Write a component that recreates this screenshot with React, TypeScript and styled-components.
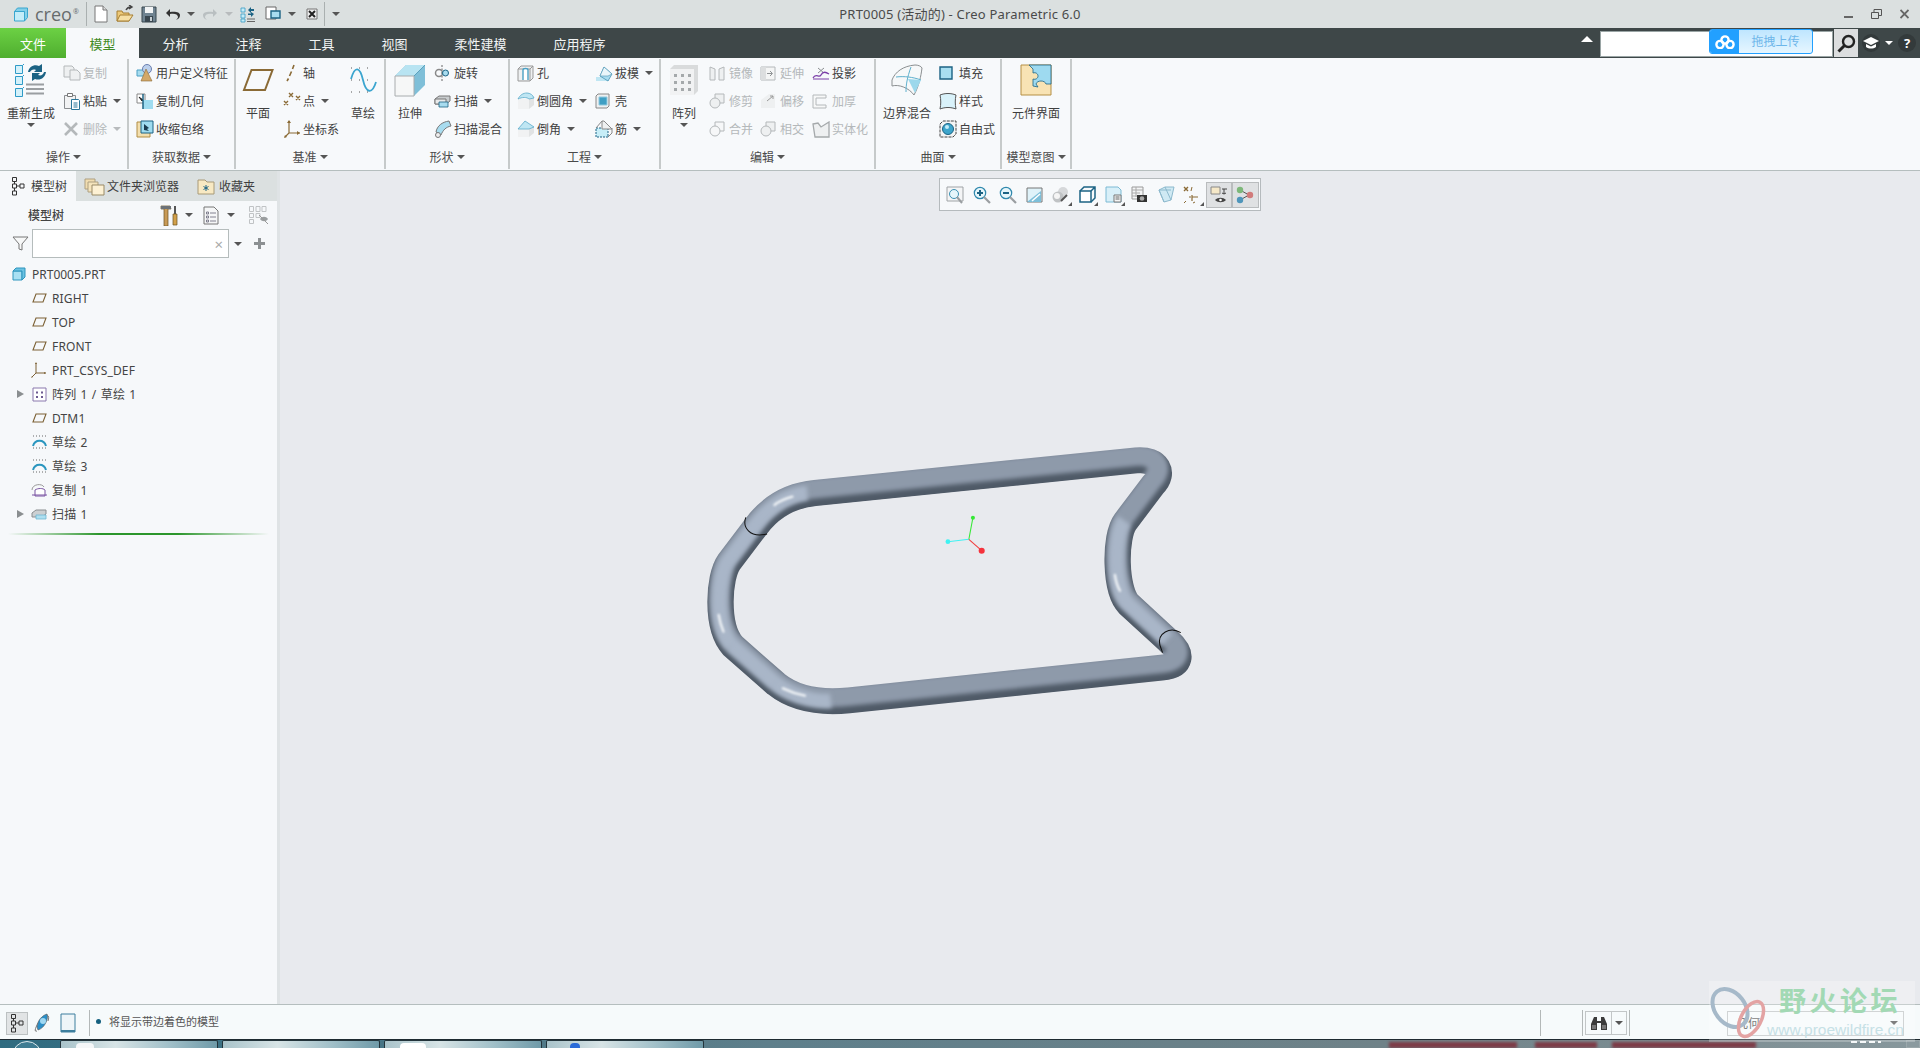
import React from 'react';
import styled, { createGlobalStyle } from 'styled-components';

const GlobalStyle = createGlobalStyle`
  html, body {
    margin: 0;
    padding: 0;
    overflow: hidden;
    background: #e8eaee;
  }
  * {
    box-sizing: border-box;
  }
`;

const FONT = '"Noto Sans", "Noto Sans CJK SC", sans-serif';

type IconDef = [number, number, React.ReactNode];

const TEAL = '#1c6384';
const SKY = '#a8dcef';
const BROWN = '#8a6a35';
const GREY = '#b4b8ba';

const icons: Record<string, IconDef> = {
  creo: [16, 15, <><path d="M1.5 4.5h10v9.5h-10z" fill="#c4ecf8" stroke="#39a6cf" /><path d="M1.5 4.5l3-3.5h10v9.5l-3 3.5v-9.5z" fill="#83cfe9" stroke="#39a6cf" /></>],
  qatNew: [14, 18, <><path d="M1 1h8l4 4v12H1z" fill="#fff" stroke="#777" /><path d="M9 1v4h4" fill="#ddd" stroke="#777" /></>],
  qatOpen: [18, 18, <><path d="M1 6h5l1 2h6v8H1z" fill="#edc978" stroke="#a67f33" /><path d="M1 16l3-6h13l-4 6z" fill="#f6dfa4" stroke="#a67f33" /><path d="M10 5c1-2 3-3 5-3M13 0l3 2-3 2" fill="none" stroke="#444" strokeWidth="1.4" /></>],
  qatSave: [16, 17, <><path d="M1 1h14v15H1z" fill="#6f8391" stroke="#39464f" /><path d="M4 1h8v6H4z" fill="#f2f4f5" /><path d="M4 10h8v6H4z" fill="#39464f" /><path d="M9 11h2v4H9z" fill="#c7d0d5" /></>],
  qatUndo: [16, 13, <path d="M5 1L1 5l4 4V6c4-1 8 0 8 3 0 1-1 2-2 3 3-1 4-3 4-5 0-3-5-4-10-3z" fill="#333" />],
  qatRedo: [16, 13, <path d="M11 1l4 4-4 4V6C7 5 3 6 3 9c0 1 1 2 2 3-3-1-4-3-4-5 0-3 5-4 10-3z" fill="#b9bfc1" />],
  qatRegen: [16, 17, <><path d="M1 2h4v4H1zM1 8h4v4H1zM1 13h4v3H1z" fill="#c4ecf8" stroke="#3a9cc4" strokeWidth=".8" /><path d="M8 4l3-3v2h3v2h-3v2zM14 8l-3 3V9H8V7.500h3V6z" fill={TEAL} /><path d="M7 13h8M7 15.500h8" stroke="#666" /></>],
  qatWindows: [17, 16, <><path d="M1 1h10v12H1z" fill="#fff" stroke="#666" /><path d="M6 5h9v7H6z" fill={SKY} stroke={TEAL} strokeWidth="1.4" /></>],
  qatClose: [12, 12, <><path d="M1 1h10v10H1z" fill="#eee" stroke="#777" /><path d="M3 3l6 6M9 3L3 9" stroke="#222" strokeWidth="2" /></>],

  regen: [34, 34, <><g fill="#d4f1fa" stroke="#2f9bc7"><path d="M1.500 2.500h7v8h-7zM1.500 13.500h7v8h-7zM1.500 25.500h7v8h-7z" /></g><path d="M8.500 2.500l1.500-1.500M8.500 13.500l1.500-1.500M8.500 25.500l1.500-1.500" stroke="#2f9bc7" /><path d="M14 9c1-5 6-8 11-6l3-2v8h-8l2-2c-3-1-5 0-6 2zM32 9c-1 6-6 9-11 7l-3 2v-8h8l-2 2c3 1 5 0 6-3z" fill={TEAL} /><path d="M12 21.500h18M12 26h18M12 30.500h18" stroke="#9a9ea1" strokeWidth="2" /></>],
  copy: [18, 16, <g fill="#eef0f1" stroke={GREY}><path d="M1 1h8l2 2v9H1z" /><path d="M7 5h7l3 3v7H7z" /></g>],
  paste: [18, 18, <><path d="M1.500 3.500h11v13h-11z" fill="#f2f3f4" stroke="#8a8d90" /><path d="M4.500 1.500h5v3h-5z" fill="#fff" stroke="#777" /><path d="M8.500 7.500h7l1 1v9h-8z" fill="#fff" stroke="#2b7699" /><path d="M10.500 11h4M10.500 13h4M10.500 15h4" stroke="#2b7699" /></>],
  remove: [16, 16, <path d="M2 2l12 12M14 2L2 14" stroke={GREY} strokeWidth="2.600" />],
  udf: [18, 18, <><path d="M1 6h10l-2 6H1z" fill={SKY} stroke="#4a9fc4" /><circle cx="11" cy="5" r="4.500" fill="#bcd0ec" stroke="#6b7fb0" /><path d="M10 5l-5 12h11z" fill="#d3a868" stroke="#8a6a35" strokeWidth=".6" /></>],
  copyGeom: [18, 18, <><path d="M1 2h8v9H1z" fill="#fff" stroke="#888" /><path d="M3 5l4 3-1 1z" fill="#222" stroke="#222" /><path d="M7 8h10v9H7z" fill="#9fdcf0" /><path d="M7 2v15" stroke={TEAL} strokeWidth="1.500" /></>],
  shrink: [18, 18, <><path d="M1 2h13v15H1z" fill="#f3dfae" stroke="#b18d44" /><path d="M5 1h12v12H5z" fill="#9fdcf0" stroke={TEAL} /><path d="M8 4l5 4-2 1 2 2-5-1z" fill="#1a3c50" /></>],
  plane: [32, 24, <path d="M9.500 2h21L23 22H2z" fill="none" stroke={BROWN} strokeWidth="2" />],
  axis: [14, 18, <path d="M11 1l-1.500 4M8.500 7.500l-2 4.500M5.500 14.500L4 17" stroke={BROWN} strokeWidth="1.600" />],
  point: [18, 18, <g stroke={BROWN} strokeWidth="1.400"><path d="M6 1l4 4M10 1L6 5M13 4l4 4M17 4l-4 4M1 9l4 4M5 9l-4 4" /></g>],
  csys: [18, 18, <><path d="M6 1v12l-4 4M6 13h11" fill="none" stroke={BROWN} strokeWidth="1.200" /><path d="M6 0l2 3H4zM17 13l-3 2v-4zM1 18l1-3 2 2z" fill={BROWN} /></>],
  sketch: [28, 28, <><path d="M2 12C6 -2 11 0 14 13s9 15 13 2" fill="none" stroke="#3ba5cf" strokeWidth="1.800" transform="translate(0 1)" /><path d="M2 2h24M2 26h24M2 14h24" stroke="#555" strokeWidth="1" strokeDasharray="1 7" /></>],
  extrude: [32, 34, <><path d="M1 13L12 2h19v20L20 33z" fill="#7fbfd8" /><path d="M1 13L12 2h19L20 13z" fill="#b8e4f2" /><path d="M1 13h19v20H1z" fill="#f6f7f7" stroke="#a8acae" /><path d="M20 13L31 2" stroke="#5aa0bd" /></>],
  revolve: [16, 16, <><path d="M8 0v16" stroke="#666" strokeDasharray="2 1.500" /><circle cx="5" cy="8" r="3.500" fill="none" stroke="#888" strokeWidth="1.500" /><circle cx="11.500" cy="8" r="3" fill={SKY} stroke={TEAL} /></>],
  sweep: [17, 14, <><path d="M1 5l4-3h11v5l-4 3H1z" fill="#c8ccce" stroke="#777" /><path d="M1 5h11v5H1z" fill="#e8eaeb" stroke="#777" /><path d="M5 8h9v5H5z" fill={SKY} stroke={TEAL} strokeWidth=".8" /></>],
  sweepBlend: [18, 18, <><path d="M2 12C3 6 8 2 15 1l2 5c-5 1-8 4-10 9z" fill={SKY} stroke="#777" /><circle cx="4" cy="15" r="2.500" fill="#eee" stroke="#777" /></>],
  hole: [17, 18, <><path d="M1 5l3-3h12v12l-3 3H1z" fill="#eef0f1" stroke="#999" /><path d="M1 5h12v12M13 5l3-3" fill="none" stroke="#999" /><path d="M6 16V6c0-2 5-2 5 0v10" fill="#fff" stroke="#4aa0c4" strokeWidth="1.400" /></>],
  round: [18, 18, <><path d="M1 7h11v10H1z" fill="#f1f2f3" /><path d="M12 7l5-1v7l-5 4z" fill="#e1e3e4" /><path d="M1 7C3 3 6 1 10 1c3 0 6 2 7 5l-5 1C10 5 5 5 1 7z" fill="#bfe6f3" stroke="#5aa9c9" strokeWidth=".8" /></>],
  chamfer: [18, 18, <><path d="M1 9h11v8H1z" fill="#f1f2f3" /><path d="M12 9l5-2v6l-5 4z" fill="#e1e3e4" /><path d="M1 9l7-8 9 6-5 2z" fill="#bfe6f3" stroke="#5aa9c9" strokeWidth=".8" /></>],
  draft: [18, 17, <><path d="M1 12h13v4H1z" fill="#bfe6f3" /><path d="M5 11L9 2l8 7-4 7z" fill="#a8dcef" stroke="#4a93b3" strokeWidth=".8" /><path d="M9 2L5 11h8l4-2z" fill="#eaf6fa" stroke="#4a93b3" strokeWidth=".6" /></>],
  shell: [15, 16, <><path d="M1 3l2-2h11v12l-2 2H1z" fill="#eef0f1" stroke="#888" /><path d="M4 4h8v8H4z" fill="#3f9fc4" stroke="#8fc9df" /></>],
  rib: [18, 18, <><path d="M1 8h12v9H1z" fill="#c7eef8" stroke={TEAL} strokeDasharray="2 1" /><path d="M7 1v8h10L9 1z" fill="#eef0f1" stroke="#888" /><path d="M1 8l6-7M13 17l4-4V8" fill="none" stroke="#888" /></>],
  pattern: [30, 32, <><path d="M1 5l4-4h24v26l-4 4H1z" fill="#d9dbdc" /><path d="M1 5h24v26H1z" fill="#f1f2f3" /><g fill="#a5a9ab"><path d="M5 10h3v3H5zM12 10h3v3h-3zM19 10h3v3h-3zM5 17h3v3H5zM12 17h3v3h-3zM19 17h3v3h-3zM5 24h3v3H5zM12 24h3v3h-3zM19 24h3v3h-3z" /></g></>],
  mirror: [16, 16, <g fill="#eef0f1" stroke={GREY}><path d="M1 2l5 2v11H1zM15 2l-5 2v11h5z" /></g>],
  trim: [16, 16, <g fill="#eef0f1" stroke={GREY}><path d="M6 1h9v9H6z" /><circle cx="6" cy="10" r="5" /></g>],
  merge: [16, 16, <g fill="#f6f7f8" stroke={GREY}><path d="M6 1h9v9H6z" /><circle cx="6" cy="10" r="5" /></g>],
  extend: [16, 15, <><path d="M1 1h14v13H1z" fill="#f4f5f5" stroke={GREY} /><path d="M1 1h5v13H1z" fill="#dcdedf" /><path d="M7 7.500h5M10 5l2.500 2.500L10 10" fill="none" stroke="#8f9395" /></>],
  offset: [16, 16, <><path d="M1 15V7l8-6h6v14z" fill="#eef0f1" /><path d="M7 8l6-5M10 3h3v3" fill="none" stroke="#999" /></>],
  intersect: [16, 16, <g fill="#eef0f1" stroke={GREY}><path d="M6 1h9v9H6z" /><circle cx="6" cy="10" r="5" /></g>],
  project: [18, 14, <><path d="M6 2l6 5M6 7l6-5" stroke="#8a8d90" /><path d="M1 12c3-6 6 1 8-3s5-3 8-1" fill="none" stroke="#7b3fa8" strokeWidth="1.300" /><path d="M1 13h16" stroke="#7b3fa8" /></>],
  thicken: [15, 15, <path d="M1 1h13v3H4v7h10v3H1z" fill="#f7f8f8" stroke={GREY} />],
  solidify: [18, 17, <path d="M1 3l5-1 3 4 8-5v15H3z" fill="#eef0f1" stroke="#a5a9ab" strokeWidth="1.300" />],
  boundary: [32, 32, <><path d="M1 16C4 8 12 2 24 1c3 0 6 1 7 3-1 8-3 18-8 27C18 24 8 20 1 22z" fill="#f6f8f9" stroke="#8b8f91" /><path d="M15 28c0-7 1-14 5-25M5 13c8-1 17 0 25 3" fill="none" stroke="#5fb0cd" /><path d="M17 15l13 1-6 13z" fill="#9bd8ec" /></>],
  fill: [14, 14, <><path d="M1 1h12v12H1z" fill="#a8dff1" stroke={TEAL} strokeWidth="1.400" /></>],
  style: [18, 18, <><path d="M1 3c5-2 11-2 16 0-1 5-1 9 0 14-5-2-11-2-16 0 1-5 1-9 0-14z" fill="#d9f2fa" stroke="#555" /></>],
  freestyle: [18, 18, <><path d="M1 4l3-3h13v13l-3 3H1z" fill="#f4f5f5" stroke="#444" strokeDasharray="3 1" /><circle cx="9" cy="9" r="5.500" fill="#3ea5cb" stroke="#1c6384" /><circle cx="8" cy="7" r="2" fill="#c5edf8" /></>],
  component: [32, 32, <><path d="M1 1h30v30H1z" fill="#f8e3b4" stroke="#b58f45" /><path d="M9 1h22v19h-5c-1-4-9-4-10 0l2 3-5-1V15c3 1 5-1 5-3s-2-4-5-3V5z" fill="#9edaf0" stroke={TEAL} strokeWidth=".8" /></>],

  treeTab: [14, 20, <g fill="none" stroke="#333"><path d="M1.500 1.500h4v4h-4zM1.500 8h4v4h-4zM1.500 15h4v4h-4zM9 8h4v4H9z" /><path d="M3.500 5.500V8M3.500 12v3M5.500 10H9" /></g>],
  folders: [21, 20, <><path d="M1 3h10v10H1z" fill="#f1ddb0" stroke="#ad9f80" /><path d="M4 6h10v10H4z" fill="#f5e4bc" stroke="#ad9f80" /><path d="M8 9h12v10H8z" fill="#fdf1d4" stroke="#998a66" /></>],
  favorite: [18, 17, <><path d="M1 2h7l2 2h7v12H1z" fill="#f8e9c3" stroke="#a89a78" /><path d="M9 7v6M6.500 8.500l5 3M11.500 8.500l-5 3" stroke={TEAL} /></>],
  tools: [18, 21, <><path d="M1 1h9l1 3H8v17H4V4H1z" fill="#c89a56" stroke="#6c5020" strokeWidth=".7" /><path d="M1 1h10v3H1z" fill="#6c7176" /><path d="M14 1h2v8h-2z" fill="#555" /><path d="M13 9h4v11h-4z" fill="#d2a04a" stroke="#6c5020" strokeWidth=".7" /></>],
  doc: [16, 19, <><path d="M1 1h10l4 4v13H1z" fill="#f5f6f7" stroke="#777" /><path d="M3.500 6h2v2h-2zM3.500 10h2v2h-2zM3.500 14h2v2h-2zM7 7h6M7 11h6M7 15h6" fill="none" stroke="#667" strokeWidth=".8" /></>],
  treeHide: [21, 20, <><g fill="none" stroke="#c0c3c5"><path d="M1.500 1.500h4v5h-4zM8 1.500h4v5H8zM14 1.500h4v5h-4zM1.500 8.500h4v4h-4zM1.500 14.500h4v4h-4zM8 8.500h4v4H8z" /></g><path d="M12 14c2-3 6-3 8 0-2 3-6 3-8 0z" fill="#9a9ea0" /><path d="M11 10l9 9" stroke="#999" /></>],
  funnel: [17, 15, <><path d="M1 1h15L10 8v6l-3-1V8z" fill="#f7f8f8" stroke="#777" /></>],
  part: [14, 14, <><path d="M1 4h9v9H1z" fill="#a8e0f3" stroke="#2f95bd" /><path d="M1 4l3-3h9v9l-3 3V4z" fill="#6bc2e2" stroke="#2f95bd" /></>],
  datumPlane: [15, 10, <path d="M4 1h10l-3 8H1z" fill="none" stroke="#7c6034" strokeWidth="1.100" />],
  treeCsys: [16, 16, <><path d="M5 1v10l-4 4M5 11h10" fill="none" stroke="#7c6034" /><path d="M5 0l1 2H4zM15 11l-2 1v-2zM0 16l1-2 1 1z" fill="#7c6034" /></>],
  treePattern: [15, 15, <><path d="M1 1h13v13H1z" fill="#fff" stroke="#8a78ad" /><path d="M4 4.500h2v2H4zM9 4.500h2v2H9zM4 9h2v2H4zM9 9h2v2H9z" fill="#6d5a91" /></>],
  treeSketch: [15, 14, <><path d="M1 1h13M1 13h13" stroke="#666" strokeDasharray="1 2" /><path d="M1 11c2-7 11-7 13 0" fill="none" stroke="#2b96bf" strokeWidth="2" /></>],
  treeCopy: [16, 16, <><path d="M1 8c0-6 10-7 12-3" fill="none" stroke="#999" /><path d="M4 8c3-2 8-2 10 0v6H4z" fill="#fff" stroke="#7a55a3" /><path d="M1 13h15" stroke="#7a55a3" /></>],
  treeSweep: [16, 12, <><path d="M1 5l4-3h10v4l-4 3H1z" fill="#ccd0d2" stroke="#8a8e90" /><path d="M5 7h10v4H5z" fill="#aedff0" stroke="#6fb6d1" strokeWidth=".8" /></>],

  zoomFit: [18, 18, <><path d="M1 1h16v14H1z" fill="#f4f5f6" stroke="#9fa3a6" /><circle cx="8" cy="8" r="4.500" fill="#e6f6fb" stroke="#3a90b4" /><path d="M11 11l5 6" stroke="#9a9ea1" strokeWidth="2" /></>],
  zoomIn: [18, 18, <><circle cx="7" cy="7" r="5.700" fill="#e6f6fb" stroke="#2f88ad" strokeWidth="1.200" /><path d="M4 7h6M7 4v6" stroke={TEAL} strokeWidth="2" /><path d="M11 11l6 6" stroke="#9a9ea1" strokeWidth="2.200" /></>],
  zoomOut: [18, 18, <><circle cx="7" cy="7" r="5.700" fill="#e6f6fb" stroke="#2f88ad" strokeWidth="1.200" /><path d="M4 7h6" stroke={TEAL} strokeWidth="2" /><path d="M11 11l6 6" stroke="#9a9ea1" strokeWidth="2.200" /></>],
  repaint: [17, 16, <><path d="M1 1h15v14H1z" fill="#dff2f9" stroke="#777" /><path d="M1 15L15 4v11z" fill="#7dbfd9" /><path d="M6 14l8-7" stroke="#fff" strokeWidth="1.500" /></>],
  shade: [17, 17, <><circle cx="11" cy="6" r="5" fill="#d6d8da" /><circle cx="6" cy="11" r="5.500" fill="#c0c3c5" /><circle cx="5" cy="10" r="3" fill="#f5f5f5" /><path d="M9 15l6-6" stroke="#555" strokeWidth="2" /></>],
  named: [17, 17, <><path d="M1 5h11v11H1z" fill="#fff" stroke={TEAL} strokeWidth="1.500" /><path d="M1 5l4-4h11v11l-4 4M12 5l4-4" fill="none" stroke={TEAL} strokeWidth="1.500" /></>],
  sections: [17, 17, <><path d="M1 1h12l3 3v12H1z" fill="#d8eff8" stroke="#7dbad4" /><path d="M9 9h7v7H9z" fill="#f4f5f5" stroke="#777" /><path d="M10.500 11h4M10.500 13h4" stroke="#666" /></>],
  camera: [17, 17, <><path d="M1 1h11v12H1z" fill="#f4f5f6" stroke="#999" /><path d="M1 4h11M1 7h8M1 10h6M5 1v10" stroke="#aaa" /><path d="M6 9h10v7H6z" fill="#333" /><circle cx="11" cy="12.500" r="2.300" fill="#aaa" /></>],
  view: [17, 17, <><path d="M1 4l6-3h9l-3 13-7 2z" fill="#cfe9f3" stroke="#8cb9cd" /><path d="M1 4l5 12M7 1l6 13M1 4h12" stroke="#8cb9cd" fill="none" /></>],
  datums: [19, 18, <><path d="M1 1l4 4M5 1L1 5" stroke={BROWN} strokeWidth="1.400" /><path d="M9 1L8 5M3 15L1 17M12 16l-2 1" stroke={BROWN} /><path d="M9 9v6M9 11h6M6 11h2" stroke={BROWN} strokeWidth="1.200" fill="none" /></>],
  annot: [18, 18, <><path d="M1 1h9v7H1z" fill="#f5e8c8" stroke="#888" /><path d="M12 3h5M14 3v5l-2-1M14 8l2-1" fill="none" stroke="#444" /><path d="M5 14c3-3 8-3 11 0-3 3-8 3-11 0z" fill="#444" /><circle cx="10.500" cy="14" r="1.300" fill="#fff" /></>],
  spin: [18, 18, <><path d="M4 4l9 5M4 14l9-5" stroke="#555" /><circle cx="4" cy="4" r="3.200" fill="#7db87a" /><circle cx="14" cy="9" r="3.200" fill="#d17b7b" /><circle cx="4" cy="14" r="3.200" fill="#4f96bb" /></>],

  globe: [16, 20, <><path d="M4 17C1 12 6 3 13 1c2 4-2 14-9 16z" fill="#2b8fc7" stroke="#555" strokeWidth=".6" /><path d="M3 18c-3 1-2-2 1-8M13 2c2 1 2 3 1 6" fill="none" stroke="#777" /><circle cx="9" cy="8" r="3" fill="#9fd8f2" /></>],
  pane: [16, 20, <><path d="M1 1h14v18H1z" fill="#eef5f8" stroke="#3d7f9e" /><path d="M1 18h14" stroke="#3d7f9e" strokeWidth="2" /></>],
  binoculars: [18, 16, <><path d="M1 9l3-7h3v4h4V2h3l3 7v6h-6V8H7v7H1z" fill="#3b3b3b" /><path d="M2 10h4v4H2zM12 10h4v4h-4z" fill="#777" /></>],
  search: [19, 19, <><circle cx="11.500" cy="7.500" r="5.500" fill="none" stroke="#222" strokeWidth="2.400" /><path d="M7.500 11.500L1.500 17.500" stroke="#222" strokeWidth="3" /></>],
  cap: [18, 14, <><path d="M1 5l8-4 8 4-8 4z" fill="#fff" /><path d="M4 8v3c3 2 7 2 10 0V8l-5 2.500z" fill="#fff" /></>],
  baidu: [20, 14, <><circle cx="10" cy="5" r="3.600" fill="none" stroke="#fff" strokeWidth="2.400" /><circle cx="5" cy="9.500" r="3.600" fill="none" stroke="#fff" strokeWidth="2.400" /><circle cx="15" cy="9.500" r="3.600" fill="none" stroke="#fff" strokeWidth="2.400" /></>],
};

const IconSvg = styled.svg`
  display: block;
  flex: none;
`;

const Icon: React.FC<{ name: string }> = ({ name }) => {
  const [w, h, body] = icons[name];
  return (
    <IconSvg width={w} height={h} viewBox={`0 0 ${w} ${h}`}>
      {body}
    </IconSvg>
  );
};

const Page = styled.div`
  position: relative;
  width: 1920px;
  height: 1048px;
  display: flex;
  flex-direction: column;
  overflow: hidden;
  font-family: ${FONT};
  font-size: 12px;
  color: #3f3f3f;
`;

const Caret = styled.span<{ $off?: boolean; $light?: boolean }>`
  flex: none;
  width: 0;
  height: 0;
  border-left: 4px solid transparent;
  border-right: 4px solid transparent;
  border-top: 4px solid ${(p) => (p.$light ? '#fff' : p.$off ? '#b8bbbd' : '#555')};
`;

/* title bar */
const TitleBar = styled.header`
  height: 28px;
  display: grid;
  grid-template-columns: 1fr auto 1fr;
  align-items: center;
  background: #dbe0e0;
`;

const QuickBar = styled.div`
  display: flex;
  align-items: center;
  padding-left: 13px;
`;

const Logo = styled.span`
  width: 73px;
  display: flex;
  align-items: center;
  gap: 6px;
  font-family: "Open Sans", sans-serif;
  font-size: 18px;
  line-height: 20px;
  color: #676c6d;

  sup {
    font-size: 7px;
    line-height: 7px;
    margin: -6px 0 0 -5px;
  }
`;

const TitleSep = styled.i`
  width: 1px;
  height: 24px;
  background: #aab0b0;
`;

const QuickSlot = styled.span<{ $w: number; $left?: number }>`
  width: ${(p) => p.$w}px;
  margin-left: ${(p) => p.$left ?? 0}px;
  flex: none;
  display: flex;
  justify-content: center;
  align-items: center;
`;

const TitleText = styled.div`
  padding-bottom: 1px;
  font-size: 13px;
  letter-spacing: 0.2px;
  color: #4a4a4a;
  white-space: nowrap;
`;

const WindowControls = styled.div`
  justify-self: end;
  display: flex;
  align-items: center;
  gap: 18px;
  padding-right: 11px;
`;

/* tab bar */
const TabBar = styled.nav`
  height: 30px;
  display: flex;
  align-items: stretch;
  background: #3e4748;
`;

const FileTab = styled.div`
  width: 66px;
  display: flex;
  align-items: center;
  justify-content: center;
  background: linear-gradient(180deg, #6cd144, #4fae2f);
  color: #fff;
  font-size: 13px;
`;

const Tab = styled.div<{ $active?: boolean }>`
  display: flex;
  align-items: center;
  padding: 0 23.5px;
  font-size: 13px;
  background: ${(p) => (p.$active ? '#f7f9fb' : 'transparent')};
  color: ${(p) => (p.$active ? '#3f8a24' : '#f2f4f4')};
`;

const TabTools = styled.div`
  margin-left: auto;
  display: flex;
  align-items: center;
`;

const Chevron = styled.i`
  width: 0;
  height: 0;
  margin: -9px 7px 0 0;
  border-left: 6px solid transparent;
  border-right: 6px solid transparent;
  border-bottom: 6px solid #fff;
`;

const SearchBox = styled.div`
  position: relative;
  width: 233px;
  height: 26px;
  margin: 2px 0 0 0;
  background: #fff;
  border: 1px solid #9aa5a5;
`;

const UploadBadge = styled.div`
  position: absolute;
  top: -3px;
  left: 108px;
  width: 104px;
  height: 25px;
  display: flex;
  border: 1px solid #22a0ff;
  border-radius: 3px;
  overflow: hidden;
  background: linear-gradient(180deg, #bfe6ff, #e6f6ff);
  color: #6db6ea;
  font-size: 12px;
`;

const UploadLogo = styled.div`
  width: 29px;
  display: flex;
  align-items: center;
  justify-content: center;
  background: #22a0ff;
`;

const UploadText = styled.div`
  flex: 1;
  text-align: center;
  line-height: 23px;
`;

const SearchButton = styled.div`
  width: 24px;
  height: 28px;
  margin-left: 1px;
  display: flex;
  align-items: center;
  justify-content: center;
  background: #dcdedf;
`;

const RoundGlyph = styled.span`
  width: 18px;
  height: 18px;
  display: flex;
  align-items: center;
  justify-content: center;
  border-radius: 50%;
  background: #333a3b;
  color: #fff;
  font-weight: 700;
  font-size: 13px;
`;

const TabHelp = styled.div`
  display: flex;
  align-items: center;
  gap: 5px;
  padding: 0 4px 0 4px;
`;

/* ribbon */
const Ribbon = styled.section`
  height: 113px;
  display: flex;
  background: #f7f9fb;
  border-bottom: 1px solid #b5bebe;
`;

const Group = styled.div<{ $w: number }>`
  width: ${(p) => p.$w}px;
  flex: none;
  display: flex;
  flex-direction: column;
  height: 110px;
  margin-top: 1px;
  border-right: 2px solid #c6caca;
`;

const GroupBody = styled.div<{ $pad: number }>`
  height: 86px;
  display: flex;
  padding-left: ${(p) => p.$pad}px;
`;

const GroupName = styled.div`
  flex: 1;
  display: flex;
  align-items: center;
  justify-content: center;
  gap: 3px;
  color: #4a4a4a;
`;

const BigTool = styled.div<{ $w: number }>`
  width: ${(p) => p.$w}px;
  flex: none;
  display: flex;
  flex-direction: column;
  align-items: center;
  white-space: nowrap;
  color: #3f3f3f;
`;

const BigIconBox = styled.div`
  height: 42px;
  display: flex;
  align-items: center;
  justify-content: center;
`;

const BigLabel = styled.div`
  margin-top: 5px;
  line-height: 16px;
`;

const BigCaret = styled.div`
  margin-top: 5px;
`;

const ToolColumn = styled.div<{ $w: number; $left?: number }>`
  width: ${(p) => p.$w}px;
  margin-left: ${(p) => p.$left ?? 0}px;
  flex: none;
  display: flex;
  flex-direction: column;
`;

const SmallTool = styled.div<{ $off?: boolean }>`
  height: 28px;
  display: flex;
  align-items: center;
  white-space: nowrap;
  color: ${(p) => (p.$off ? '#b4b8ba' : '#3f3f3f')};
`;

const SmallIcon = styled.span`
  width: 20px;
  flex: none;
  display: flex;
  align-items: center;
`;

const CaretGap = styled.span`
  display: flex;
  margin-left: 6px;
`;

const Tool: React.FC<{ icon: string; label: string; off?: boolean; arrow?: boolean }> = ({ icon, label, off, arrow }) => (
  <SmallTool $off={off}>
    <SmallIcon>
      <Icon name={icon} />
    </SmallIcon>
    {label}
    {arrow && (
      <CaretGap>
        <Caret $off={off} />
      </CaretGap>
    )}
  </SmallTool>
);

const Big: React.FC<{ icon: string; label: string; w: number; arrow?: boolean }> = ({ icon, label, w, arrow }) => (
  <BigTool $w={w}>
    <BigIconBox>
      <Icon name={icon} />
    </BigIconBox>
    <BigLabel>{label}</BigLabel>
    {arrow && (
      <BigCaret>
        <Caret />
      </BigCaret>
    )}
  </BigTool>
);

const RibbonGroup: React.FC<{ w: number; pad: number; name: string; children: React.ReactNode }> = ({ w, pad, name, children }) => (
  <Group $w={w}>
    <GroupBody $pad={pad}>{children}</GroupBody>
    <GroupName>
      {name}
      <Caret />
    </GroupName>
  </Group>
);

/* main area */
const Main = styled.main`
  flex: 1;
  min-height: 0;
  display: flex;
`;

const Panel = styled.aside`
  width: 280px;
  flex: none;
  display: flex;
  flex-direction: column;
  background: #f6f8fa;
  border-right: 3px solid #dfe3e5;
`;

const PanelTabs = styled.div`
  height: 30px;
  display: flex;
  background: #dbe0e0;
`;

const PanelTab = styled.div<{ $active?: boolean; $w: number; $gap: number }>`
  width: ${(p) => p.$w}px;
  display: flex;
  align-items: center;
  gap: ${(p) => p.$gap}px;
  padding-left: ${(p) => (p.$active ? 11 : 8)}px;
  background: ${(p) => (p.$active ? '#f6f8fa' : 'transparent')};
`;

const TreeHeader = styled.div`
  height: 28px;
  display: flex;
  align-items: center;
  padding-left: 28px;
`;

const TreeTitle = styled.span`
  width: 132px;
  font-weight: 500;
  color: #444;
`;

const HeaderSlot = styled.span<{ $w: number }>`
  width: ${(p) => p.$w}px;
  flex: none;
  display: flex;
  align-items: center;
`;

const FilterRow = styled.div`
  height: 29px;
  display: flex;
  align-items: center;
  padding-left: 12px;
`;

const FilterInput = styled.div`
  width: 197px;
  height: 29px;
  margin: 0 5px 0 3px;
  display: flex;
  align-items: center;
  justify-content: flex-end;
  padding-right: 5px;
  background: #fff;
  border: 1px solid #b5bcbc;
  color: #aaa;
  font-size: 15px;
`;

const PlusMark = styled.span`
  width: 11px;
  height: 11px;
  margin-left: 12px;
  background:
    linear-gradient(#8c9092, #8c9092) center / 11px 3px no-repeat,
    linear-gradient(#8c9092, #8c9092) center / 3px 11px no-repeat;
`;

const TreeList = styled.ul`
  list-style: none;
  margin: 4px 0 0;
  padding: 0;
`;

const TreeRow = styled.li<{ $root?: boolean }>`
  height: 24px;
  display: flex;
  align-items: center;
  color: #444;
  letter-spacing: ${(p) => (p.$root ? 0 : 0.15)}px;
  word-spacing: 1px;
  padding-left: ${(p) => (p.$root ? 12 : 31)}px;
  gap: ${(p) => (p.$root ? 6 : 5)}px;
  position: relative;
`;

const Expander = styled.i`
  position: absolute;
  left: 17px;
  top: 8px;
  width: 0;
  height: 0;
  border-top: 4px solid transparent;
  border-bottom: 4px solid transparent;
  border-left: 7px solid #8a8e90;
`;

const TreeIconBox = styled.span`
  width: 16px;
  display: flex;
  justify-content: center;
`;

const TreeEnd = styled.div`
  height: 2px;
  margin: 7px 8px 0;
  background: linear-gradient(90deg, transparent, #2c962c 35%, #2c962c 65%, transparent);
`;

const Canvas = styled.div`
  position: relative;
  flex: 1;
  display: flex;
  flex-direction: column;
  align-items: center;
  padding-top: 7px;
  background: #e8eaee;
`;

const ViewBar = styled.div`
  width: 322px;
  height: 33px;
  display: flex;
  align-items: center;
  padding-left: 2px;
  background: #f7f9fb;
  border: 1.500px solid #b5babd;
`;

const ViewButton = styled.span<{ $on?: boolean; $more?: boolean }>`
  position: relative;
  width: 26.4px;
  height: 26px;
  flex: none;
  display: flex;
  align-items: center;
  justify-content: center;
  background: ${(p) => (p.$on ? '#dfe1e3' : 'transparent')};
  border: 1px solid ${(p) => (p.$on ? '#b9bcbe' : 'transparent')};
  ${(p) =>
    p.$more &&
    `&::after {
      content: '';
      position: absolute;
      right: 1px;
      bottom: 1px;
      border-left: 4px solid transparent;
      border-bottom: 4px solid #555;
    }`}
`;

const Model = styled.svg`
  position: absolute;
  left: 410px;
  top: 259px;
`;

/* status */
const StatusBar = styled.footer`
  height: 35px;
  display: flex;
  align-items: center;
  padding: 2px 0 0 6px;
  background: #f6fafb;
  border-top: 1px solid #b5bebe;
`;

const StatusToggle = styled.span`
  width: 22px;
  height: 23px;
  display: flex;
  align-items: center;
  justify-content: center;
  background: #e1e4e5;
  border: 1px solid #bcc1c2;
`;

const StatusIcon = styled.span<{ $w: number }>`
  width: ${(p) => p.$w}px;
  display: flex;
  justify-content: center;
`;

const StatusSep = styled.i<{ $left?: number }>`
  width: 1px;
  height: 26px;
  flex: none;
  margin-left: ${(p) => p.$left ?? 0}px;
  background: #b3b8b8;
`;

const Bullet = styled.i`
  width: 5px;
  height: 5px;
  margin: -3px 8px 0 6px;
  border-radius: 50%;
  background: #14607f;
`;

const Message = styled.span`
  width: 1431px;
  flex: none;
  margin-top: -4px;
  font-size: 11px;
  color: #555;
`;

const FindGroup = styled.div`
  width: 42px;
  height: 24px;
  margin: 0 2px;
  display: flex;
  border: 1px solid #c2c6c7;
`;

const FindIcon = styled.span`
  flex: 1;
  display: flex;
  align-items: center;
  justify-content: center;
  border-right: 1px solid #c2c6c7;
`;

const FindCaret = styled.span`
  width: 14px;
  display: flex;
  align-items: center;
  justify-content: center;
`;

const FilterSelect = styled.div`
  width: 177px;
  height: 25px;
  margin-left: 97px;
  display: flex;
  align-items: center;
  justify-content: space-between;
  padding: 0 5px 0 8px;
  border: 1px solid #c2c6c7;
  color: #555;
`;

/* windows taskbar, cut off by the bottom of the screen */
const TaskBar = styled.div`
  height: 9px;
  flex: none;
  display: flex;
  gap: 4px;
  border-top: 1px solid #1d2a30;
  background: linear-gradient(90deg, #2f6b80, #5e7f8b 40%, #6f8288 72%, #87979c);
`;

const StartOrb = styled.div`
  width: 56px;
  flex: none;
  position: relative;
  overflow: hidden;
  &::after {
    content: '';
    position: absolute;
    top: 1px;
    left: 12px;
    width: 28px;
    height: 28px;
    border-radius: 50%;
    background: #3f7c92;
    border: 1px solid #dbe8ec;
  }
`;

const TaskItem = styled.div`
  width: 158px;
  flex: none;
  display: flex;
  padding-left: 15px;
  border: 1px solid #23343b;
  border-bottom: 0;
  border-radius: 2px 2px 0 0;
  background: linear-gradient(90deg, #a9c3ca, #d7e4e6 35%, #a0bfc8 70%, #6f9aa8);
`;

const TaskIconTop = styled.span<{ $color: string; $w: number; $left: number }>`
  width: ${(p) => p.$w}px;
  height: 6px;
  margin: 2px 0 0 ${(p) => p.$left}px;
  border-radius: 4px 4px 0 0;
  background: ${(p) => p.$color};
`;

const TaskGlow = styled.div<{ $w: number; $left: number }>`
  width: ${(p) => p.$w}px;
  height: 6px;
  flex: none;
  margin: 2px 0 0 ${(p) => p.$left}px;
  background: #7e3a46;
  filter: blur(1.500px);
`;

const Clock = styled.div`
  width: 30px;
  height: 2px;
  flex: none;
  margin: 1px 0 0 auto;
  background: repeating-linear-gradient(90deg, #f4f7f8 0 6px, transparent 6px 9px);
`;

const ShowDesktop = styled.div`
  width: 14px;
  flex: none;
  margin-left: 21px;
  border: 1px solid #9aa7ab;
  background: #8b9a9f;
`;

/* forum watermark */
const Watermark = styled.div`
  position: absolute;
  left: 1709px;
  top: 981px;
  width: 206px;
  height: 61px;
  display: flex;
  background: rgba(255, 255, 255, 0.25);
  pointer-events: none;
`;

const WatermarkRings = styled.svg`
  flex: none;
`;

const WatermarkText = styled.div`
  display: flex;
  flex-direction: column;
  margin-left: -2px;
`;

const WatermarkName = styled.div`
  margin: -1px 0 0 12px;
  font-family: "Noto Sans CJK SC", sans-serif;
  font-size: 27px;
  font-weight: 700;
  line-height: 40px;
  letter-spacing: 3.5px;
  color: #a2d9b4;
  white-space: nowrap;
`;

const WatermarkUrl = styled.div`
  margin-top: 1px;
  font-family: "Liberation Sans", sans-serif;
  font-size: 15.5px;
  line-height: 17px;
  color: #c6e1e6;
  white-space: nowrap;
`;

const TUBE =
  'M370 189 L1320 91 C1385 85 1405 130 1370 165 L1288 275 C1256 318 1256 480 1298 523 L1415 632 C1460 672 1455 707 1395 713 L470 811 C400 818 320 815 255 762 L127 648 C75 590 85 440 115 397 L197 287 C235 236 290 197 370 189 Z';

const BRIGHT = [
  'M127 648 C75 590 85 440 115 397 L197 287 C235 236 290 197 350 192',
  'M255 762 L127 648',
  'M420 815 C400 818 320 815 255 762',
  'M1288 275 C1256 318 1256 480 1298 523 L1415 632',
];

const TubeModel: React.FC = () => (
  <Model width={530} height={300} viewBox="0 0 1568 900" preserveAspectRatio="none">
    <defs>
      <mask id="tube-mask" maskUnits="userSpaceOnUse" x="0" y="0" width="1568" height="900">
        <path d={TUBE} fill="none" stroke="#fff" strokeWidth="78" />
      </mask>
      <filter id="soft" x="-20%" y="-20%" width="140%" height="140%">
        <feGaussianBlur stdDeviation="7" />
      </filter>
      <filter id="soft-small" x="-50%" y="-50%" width="200%" height="200%">
        <feGaussianBlur stdDeviation="3" />
      </filter>
    </defs>
    <g mask="url(#tube-mask)">
      <path d={TUBE} fill="none" stroke="#4f5a67" strokeWidth="82" />
      <g filter="url(#soft)" transform="translate(-3 -14)">
        <path d={TUBE} fill="none" stroke="#8e9aaa" strokeWidth="62" />
      </g>
      <g filter="url(#soft)" transform="translate(-3 -3)" fill="none" stroke="#a9b6c8" strokeWidth="44">
        {BRIGHT.map((d) => (
          <path key={d} d={d} />
        ))}
      </g>
      <g filter="url(#soft-small)" fill="none" stroke="#f1f4f7" strokeWidth="7" strokeLinecap="round">
        <path d="M250 225 C265 212 285 205 303 200" />
        <path d="M85 555 C88 575 93 590 99 605" />
        <path d="M275 775 C295 785 315 792 340 797" />
        <path d="M1257 435 C1260 455 1265 470 1272 482" />
      </g>
    </g>
    <g fill="none" stroke="#111" strokeWidth="3">
      <path d="M165 262 C155 290 175 325 228 312" />
      <path d="M1452 608 C1420 588 1382 610 1390 645 L1398 668" />
    </g>
    <path d="M825 328 L837 263" stroke="#35e835" strokeWidth="3" />
    <path d="M825 328 L763 335" stroke="#3ff2f2" strokeWidth="3" />
    <path d="M825 328 L863 362" stroke="#f23a3a" strokeWidth="3" />
    <circle cx="837" cy="263" r="6" fill="#35e835" />
    <circle cx="763" cy="335" r="7" fill="#3ff2f2" />
    <circle cx="863" cy="362" r="9" fill="#f5323c" />
  </Model>
);

const tree: { icon: string; label: string; more?: boolean }[] = [
  { icon: 'datumPlane', label: 'RIGHT' },
  { icon: 'datumPlane', label: 'TOP' },
  { icon: 'datumPlane', label: 'FRONT' },
  { icon: 'treeCsys', label: 'PRT_CSYS_DEF' },
  { icon: 'treePattern', label: '阵列 1 / 草绘 1', more: true },
  { icon: 'datumPlane', label: 'DTM1' },
  { icon: 'treeSketch', label: '草绘 2' },
  { icon: 'treeSketch', label: '草绘 3' },
  { icon: 'treeCopy', label: '复制 1' },
  { icon: 'treeSweep', label: '扫描 1', more: true },
];

const viewTools: { icon: string; on?: boolean; more?: boolean }[] = [
  { icon: 'zoomFit' },
  { icon: 'zoomIn' },
  { icon: 'zoomOut' },
  { icon: 'repaint' },
  { icon: 'shade', more: true },
  { icon: 'named', more: true },
  { icon: 'sections', more: true },
  { icon: 'camera' },
  { icon: 'view' },
  { icon: 'datums', more: true },
  { icon: 'annot', on: true },
  { icon: 'spin', on: true },
];

const App: React.FC = () => (
  <>
    <GlobalStyle />
    <Page>
      <TitleBar>
        <QuickBar>
          <Logo>
            <Icon name="creo" />
            creo
            <sup>®</sup>
          </Logo>
          <TitleSep />
          <QuickSlot $w={24} $left={2}><Icon name="qatNew" /></QuickSlot>
          <QuickSlot $w={24}><Icon name="qatOpen" /></QuickSlot>
          <QuickSlot $w={24}><Icon name="qatSave" /></QuickSlot>
          <QuickSlot $w={24}><Icon name="qatUndo" /></QuickSlot>
          <QuickSlot $w={12}><Caret /></QuickSlot>
          <QuickSlot $w={26}><Icon name="qatRedo" /></QuickSlot>
          <QuickSlot $w={12}><Caret $off /></QuickSlot>
          <QuickSlot $w={20} $left={3}><Icon name="qatRegen" /></QuickSlot>
          <QuickSlot $w={20} $left={5}><Icon name="qatWindows" /></QuickSlot>
          <QuickSlot $w={18}><Caret /></QuickSlot>
          <QuickSlot $w={22}><Icon name="qatClose" /></QuickSlot>
          <QuickSlot $w={2}><TitleSep /></QuickSlot>
          <QuickSlot $w={22}><Caret /></QuickSlot>
        </QuickBar>
        <TitleText>PRT0005 (活动的) - Creo Parametric 6.0</TitleText>
        <WindowControls>
          <svg width="9" height="10" viewBox="0 0 9 10"><path d="M0 8h9" stroke="#666" strokeWidth="2" /></svg>
          <svg width="11" height="10" viewBox="0 0 11 10"><path d="M.5 3.500h7v6h-7zM3 3V.5h7.500v6H8" fill="none" stroke="#555" /></svg>
          <svg width="9" height="10" viewBox="0 0 9 10"><path d="M.5 1l8 8M8.500 1l-8 8" stroke="#666" strokeWidth="1.800" /></svg>
        </WindowControls>
      </TitleBar>

      <TabBar>
        <FileTab>文件</FileTab>
        <Tab $active>模型</Tab>
        <Tab>分析</Tab>
        <Tab>注释</Tab>
        <Tab>工具</Tab>
        <Tab>视图</Tab>
        <Tab>柔性建模</Tab>
        <Tab>应用程序</Tab>
        <TabTools>
          <Chevron />
          <SearchBox>
            <UploadBadge>
              <UploadLogo><Icon name="baidu" /></UploadLogo>
              <UploadText>拖拽上传</UploadText>
            </UploadBadge>
          </SearchBox>
          <SearchButton><Icon name="search" /></SearchButton>
          <TabHelp>
            <RoundGlyph><Icon name="cap" /></RoundGlyph>
            <Caret $light />
            <RoundGlyph>?</RoundGlyph>
          </TabHelp>
        </TabTools>
      </TabBar>

      <Ribbon>
        <RibbonGroup w={129} pad={7} name="操作">
          <Big icon="regen" label="重新生成" w={48} arrow />
          <ToolColumn $w={60} $left={8}>
            <Tool icon="copy" label="复制" off />
            <Tool icon="paste" label="粘贴" arrow />
            <Tool icon="remove" label="删除" off arrow />
          </ToolColumn>
        </RibbonGroup>
        <RibbonGroup w={107} pad={7} name="获取数据">
          <ToolColumn $w={92}>
            <Tool icon="udf" label="用户定义特征" />
            <Tool icon="copyGeom" label="复制几何" />
            <Tool icon="shrink" label="收缩包络" />
          </ToolColumn>
        </RibbonGroup>
        <RibbonGroup w={150} pad={4} name="基准">
          <Big icon="plane" label="平面" w={36} />
          <ToolColumn $w={62} $left={7}>
            <Tool icon="axis" label="轴" />
            <Tool icon="point" label="点" arrow />
            <Tool icon="csys" label="坐标系" />
          </ToolColumn>
          <Big icon="sketch" label="草绘" w={36} />
        </RibbonGroup>
        <RibbonGroup w={124} pad={6} name="形状">
          <Big icon="extrude" label="拉伸" w={36} />
          <ToolColumn $w={70} $left={6}>
            <Tool icon="revolve" label="旋转" />
            <Tool icon="sweep" label="扫描" arrow />
            <Tool icon="sweepBlend" label="扫描混合" />
          </ToolColumn>
        </RibbonGroup>
        <RibbonGroup w={151} pad={7} name="工程">
          <ToolColumn $w={78}>
            <Tool icon="hole" label="孔" />
            <Tool icon="round" label="倒圆角" arrow />
            <Tool icon="chamfer" label="倒角" arrow />
          </ToolColumn>
          <ToolColumn $w={62}>
            <Tool icon="draft" label="拔模" arrow />
            <Tool icon="shell" label="壳" />
            <Tool icon="rib" label="筋" arrow />
          </ToolColumn>
        </RibbonGroup>
        <RibbonGroup w={215} pad={8} name="编辑">
          <Big icon="pattern" label="阵列" w={30} arrow />
          <ToolColumn $w={51} $left={10}>
            <Tool icon="mirror" label="镜像" off />
            <Tool icon="trim" label="修剪" off />
            <Tool icon="merge" label="合并" off />
          </ToolColumn>
          <ToolColumn $w={52}>
            <Tool icon="extend" label="延伸" off />
            <Tool icon="offset" label="偏移" off />
            <Tool icon="intersect" label="相交" off />
          </ToolColumn>
          <ToolColumn $w={60}>
            <Tool icon="project" label="投影" />
            <Tool icon="thicken" label="加厚" off />
            <Tool icon="solidify" label="实体化" off />
          </ToolColumn>
        </RibbonGroup>
        <RibbonGroup w={126} pad={7} name="曲面">
          <Big icon="boundary" label="边界混合" w={48} />
          <ToolColumn $w={60} $left={8}>
            <Tool icon="fill" label="填充" />
            <Tool icon="style" label="样式" />
            <Tool icon="freestyle" label="自由式" />
          </ToolColumn>
        </RibbonGroup>
        <RibbonGroup w={70} pad={10} name="模型意图">
          <Big icon="component" label="元件界面" w={48} />
        </RibbonGroup>
      </Ribbon>

      <Main>
        <Panel>
          <PanelTabs>
            <PanelTab $active $w={76} $gap={6}><Icon name="treeTab" />模型树</PanelTab>
            <PanelTab $w={113} $gap={2}><Icon name="folders" />文件夹浏览器</PanelTab>
            <PanelTab $w={80} $gap={4}><Icon name="favorite" />收藏夹</PanelTab>
          </PanelTabs>
          <TreeHeader>
            <TreeTitle>模型树</TreeTitle>
            <HeaderSlot $w={25}><Icon name="tools" /></HeaderSlot>
            <HeaderSlot $w={18}><Caret /></HeaderSlot>
            <HeaderSlot $w={24}><Icon name="doc" /></HeaderSlot>
            <HeaderSlot $w={21}><Caret /></HeaderSlot>
            <HeaderSlot $w={21}><Icon name="treeHide" /></HeaderSlot>
          </TreeHeader>
          <FilterRow>
            <Icon name="funnel" />
            <FilterInput>×</FilterInput>
            <Caret />
            <PlusMark />
          </FilterRow>
          <TreeList>
            <TreeRow $root>
              <Icon name="part" />
              PRT0005.PRT
            </TreeRow>
            {tree.map((row) => (
              <TreeRow key={row.label}>
                {row.more && <Expander />}
                <TreeIconBox>
                  <Icon name={row.icon} />
                </TreeIconBox>
                {row.label}
              </TreeRow>
            ))}
          </TreeList>
          <TreeEnd />
        </Panel>
        <Canvas>
          <ViewBar>
            {viewTools.map((t) => (
              <ViewButton key={t.icon} $on={t.on} $more={t.more}>
                <Icon name={t.icon} />
              </ViewButton>
            ))}
          </ViewBar>
          <TubeModel />
        </Canvas>
      </Main>

      <StatusBar>
        <StatusToggle><Icon name="treeTab" /></StatusToggle>
        <StatusIcon $w={28}><Icon name="globe" /></StatusIcon>
        <StatusIcon $w={24}><Icon name="pane" /></StatusIcon>
        <StatusSep $left={9} />
        <Bullet />
        <Message>将显示带边着色的模型</Message>
        <StatusSep />
        <StatusSep $left={41} />
        <FindGroup>
          <FindIcon><Icon name="binoculars" /></FindIcon>
          <FindCaret><Caret /></FindCaret>
        </FindGroup>
        <StatusSep />
        <FilterSelect>
          几何
          <Caret />
        </FilterSelect>
      </StatusBar>

      <TaskBar>
        <StartOrb />
        <TaskItem><TaskIconTop $color="#f5f7f8" $w={18} $left={0} /></TaskItem>
        <TaskItem />
        <TaskItem><TaskIconTop $color="#fff" $w={26} $left={0} /></TaskItem>
        <TaskItem><TaskIconTop $color="#2a6bd8" $w={10} $left={8} /></TaskItem>
        <TaskGlow $w={128} $left={681} />
        <TaskGlow $w={62} $left={14} />
        <TaskGlow $w={144} $left={11} />
        <Clock />
        <ShowDesktop />
      </TaskBar>

      <Watermark>
        <WatermarkRings width="60" height="61" viewBox="0 0 60 61">
          <ellipse cx="21" cy="27" rx="15" ry="21" transform="rotate(-38 21 27)" fill="none" stroke="#a6b9c9" strokeWidth="4" />
          <ellipse cx="42" cy="38" rx="10" ry="19" transform="rotate(28 42 38)" fill="none" stroke="#e3a3a3" strokeWidth="3.500" />
        </WatermarkRings>
        <WatermarkText>
          <WatermarkName>野火论坛</WatermarkName>
          <WatermarkUrl>www.proewildfire.cn</WatermarkUrl>
        </WatermarkText>
      </Watermark>
    </Page>
  </>
);

export default App;
